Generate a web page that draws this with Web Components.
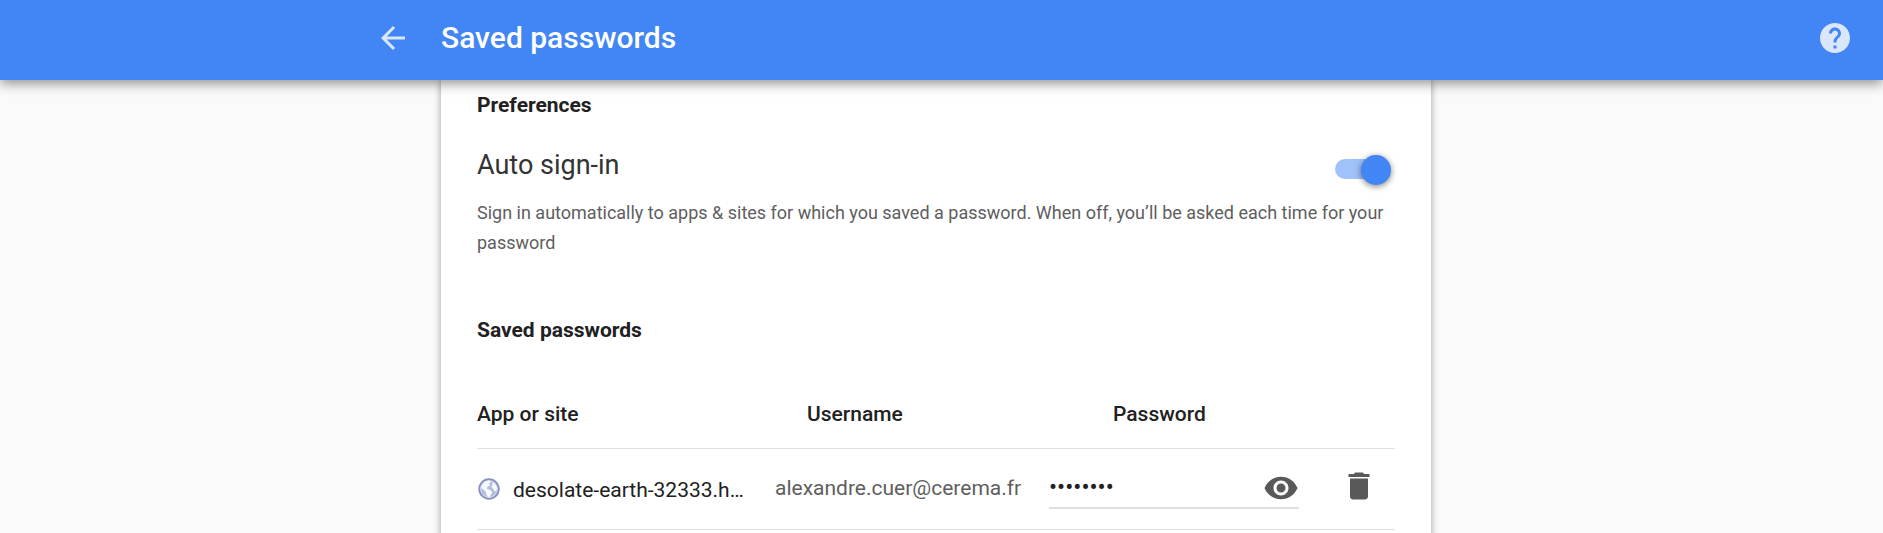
<!DOCTYPE html>
<html lang="en">
<head>
<meta charset="utf-8">
<title>Saved passwords</title>
<style>
html,body{margin:0;height:100%;overflow:hidden;background:#fafafa}
body{font-family:Roboto,sans-serif;color:#212121}
</style>
</head>
<body>
<password-page></password-page>
<script>
const define = (name, html) => {
  const t = document.createElement('template');
  t.innerHTML = html;
  customElements.define(name, class extends HTMLElement {
    constructor() {
      super();
      this.attachShadow({mode: 'open'}).append(t.content.cloneNode(true));
    }
  });
};

const icons = {
  back: '<path d="M20 11H7.83l5.59-5.59L12 4l-8 8 8 8 1.41-1.41L7.83 13H20v-2z"/>',
  help: '<path d="M12 2C6.48 2 2 6.48 2 12s4.48 10 10 10 10-4.48 10-10S17.52 2 12 2zm1 17h-2v-2h2v2zm2.07-7.75l-.9.92C13.45 12.9 13 13.5 13 15h-2v-.5c0-1.1.45-2.1 1.17-2.83l1.24-1.26c.37-.36.59-.86.59-1.41 0-1.1-.9-2-2-2s-2 .9-2 2H8c0-2.21 1.79-4 4-4s4 1.79 4 4c0 .88-.36 1.68-.93 2.25z"/>',
  eye: '<path d="M12 4.5C7 4.5 2.73 7.61 1 12c1.73 4.39 6 7.5 11 7.5s9.27-3.11 11-7.5c-1.73-4.39-6-7.5-11-7.5zM12 17c-2.76 0-5-2.24-5-5s2.24-5 5-5 5 2.24 5 5-2.24 5-5 5zm0-8c-1.66 0-3 1.34-3 3s1.34 3 3 3 3-1.34 3-3-1.34-3-3-3z"/>',
  trash: '<path d="M6 19c0 1.1.9 2 2 2h8c1.100 0 2-.9 2-2V7H6v12zM19 4h-3.500l-1-1h-5l-1 1H5v2h14V4z"/>'
};
customElements.define('md-icon', class extends HTMLElement {
  constructor() {
    super();
    this.attachShadow({mode: 'open'}).innerHTML =
      '<style>:host{display:block;width:36px;height:36px;flex:none}svg{display:block;fill:currentColor}</style>' +
      '<svg width="36" height="36" viewBox="0 0 24 24">' + icons[this.getAttribute('name')] + '</svg>';
  }
});

define('site-globe', `
<style>:host{display:block;width:24px;height:24px;flex:none}svg{display:block}</style>
<svg width="24" height="24" viewBox="0 0 24 24">
  <circle cx="12" cy="12" r="9.700" fill="#b4bfde" stroke="#8890c0" stroke-width="2"/>
  <circle cx="12" cy="12" r="8.300" fill="none" stroke="#d9dff0" stroke-width="1"/>
  <path d="M4.500 9 7.500 4.800l4.500-1.300 2 1.300-2 1.700 1 1.700-2.600 1.600-.6 2 4 1.500 1.500 2.500-1.800 2.300-1 3-3-3-.6-3L6.500 12.500 4 11zM15.500 5 19 8l1.200 4-2.400 2.800-1.600-3-1.900-1.800 1.200-2.300z" fill="#f7f9fd"/>
</svg>`);

define('app-header', `
<style>
:host{display:grid;grid-template-columns:375px 66px 1fr 36px;padding:20px 30px 0 0;height:60px;background:#4285f4;color:#fff;position:relative;z-index:1;box-shadow:0 3px 12px rgba(0,0,0,.46)}
h1{margin:0;margin-top:-4px;font-size:30px;line-height:44px;font-weight:500}
md-icon{opacity:.8}
.back{grid-column:2}
</style>
<md-icon class="back" name="back"></md-icon>
<h1><slot></slot></h1>
<md-icon name="help"></md-icon>`);

define('section-title', `
<style>:host{display:block;font-size:21px;line-height:30px;font-weight:700}</style><slot></slot>`);

define('toggle-switch', `
<style>
:host{display:flex;align-items:center;width:56px;height:31px;flex:none}
.track{width:54px;height:20px;border-radius:10px;background:#a0c2fa;display:flex;align-items:center;margin-top:-1px}
.thumb{width:30px;height:30px;flex:none;margin:1px 0 0 26px;border-radius:50%;background:#4285f4;box-shadow:0 1.5px 6px rgba(0,0,0,.5)}
</style>
<div class="track"><div class="thumb"></div></div>`);

define('setting-row', `
<style>
:host{display:block}
.top{display:flex;justify-content:space-between;align-items:flex-start;height:48px;padding-right:4px}
.label{font-size:27px;line-height:30px;color:#333}
toggle-switch{margin-top:4px}
p{margin:0;font-size:18px;line-height:30px;color:#5e5e5e}
</style>
<div class="top"><div class="label"><slot name="label"></slot></div><toggle-switch></toggle-switch></div>
<p><slot></slot></p>`);

define('table-head', `
<style>
:host{display:grid;grid-template-columns:330px 306px 1fr;font-size:21px;line-height:30px;font-weight:500;padding-bottom:19px;border-bottom:1px solid #e0e0e0}
</style><slot></slot>`);

define('password-row', `
<style>
:host{display:grid;grid-template-columns:36px 262px 274px 250px 1fr;height:80px;border-bottom:1px solid #e0e0e0;font-size:21px;line-height:30px}
site-globe{margin-top:28px}
.site{margin-top:26px}
.user{margin-top:24px;color:#5e5e5e}
.field{display:flex;justify-content:space-between;height:37px;padding-top:21px;border-bottom:2px solid #e0e0e0}
.dots{font-size:24px;line-height:35px}
.eye,.trash{color:#595959}
.trash{margin:19px 0 0 42px}
</style>
<site-globe></site-globe>
<div class="site"><slot name="site"></slot></div>
<div class="user"><slot name="user"></slot></div>
<div class="field"><span class="dots"><slot name="secret"></slot></span><md-icon class="eye" name="eye"></md-icon></div>
<md-icon class="trash" name="trash"></md-icon>`);

define('settings-card', `
<style>
:host{display:block;box-sizing:border-box;width:990px;height:473px;margin-left:441px;padding:10px 36px 0;background:#fff;box-shadow:0 0 7px rgba(0,0,0,.38)}
</style><slot></slot>`);

define('password-page', `
<style>
:host{display:block;height:533px;overflow:hidden}
setting-row{margin:30px 0 57px}
table-head{margin-top:54px}
</style>
<app-header>Saved passwords</app-header>
<settings-card>
  <section-title>Preferences</section-title>
  <setting-row><span slot="label">Auto sign-in</span>Sign in automatically to apps &amp; sites for which you saved a password. When off, you’ll be asked each time for your password</setting-row>
  <section-title>Saved passwords</section-title>
  <table-head><span>App or site</span><span>Username</span><span>Password</span></table-head>
  <password-row><span slot="site">desolate-earth-32333.h…</span><span slot="user">alexandre.cuer@cerema.fr</span><span slot="secret">••••••••</span></password-row>
</settings-card>`);
</script>
</body>
</html>
